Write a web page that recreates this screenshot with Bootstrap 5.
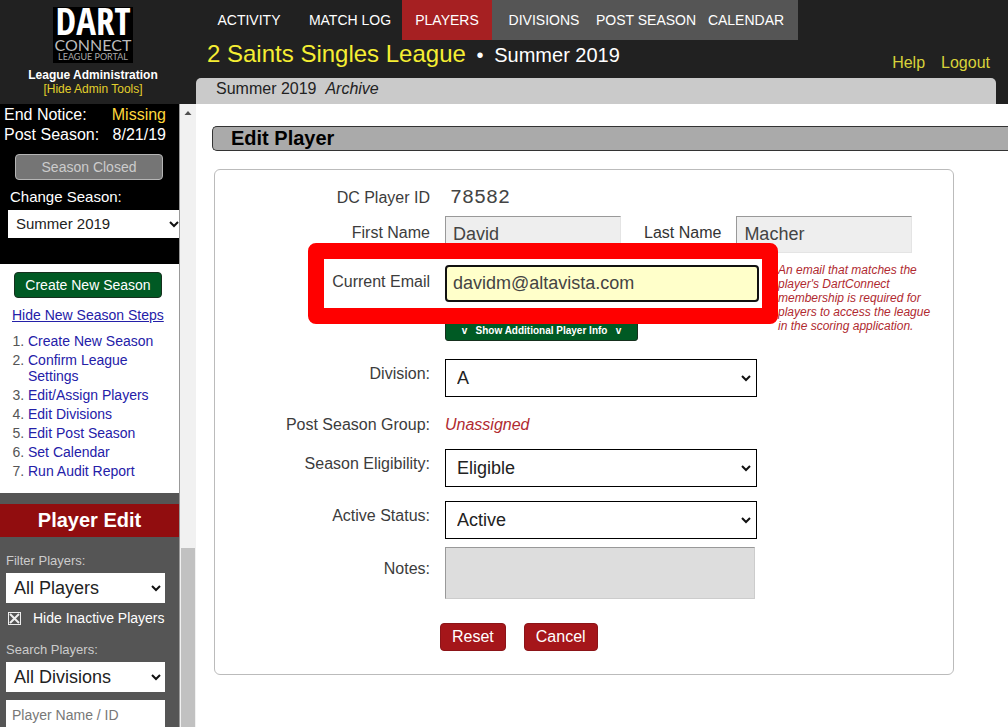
<!DOCTYPE html>
<html lang="en">
<head>
<meta charset="utf-8">
<meta name="viewport" content="width=device-width, initial-scale=1">
<title>Edit Player - DartConnect League Portal</title>
<link href="https://cdn.jsdelivr.net/npm/bootstrap@5.3.0/dist/css/bootstrap.min.css" rel="stylesheet">
<style>
  body { font-family: "Liberation Sans", Arial, sans-serif; font-size: 16px; line-height: 20px; color: #333; background: #fff; }
  .site-header { background: #212121; min-height: 104px; }
  .brand { flex: 0 0 196px; padding: 7px 10px 0 0; color: #fff; font-size: 12px; line-height: 14px; }
  .brand a { color: #e2cf2c; }
  .logo { width: 80px; height: 56px; background: #000; margin-bottom: 5px; display: block; overflow: visible; }
  .main-nav .nav-link { height: 40px; line-height: 40px; padding: 0; font-size: 14px; color: #fff; text-align: center; width: 104px; white-space: nowrap; }
  .main-nav .nav-link.active { background: #a62022; width: 90px; }
  .main-nav .w-side { width: 98px; }
  .nav-tail { background: #555; }
  .league { font-size: 24px; line-height: 28px; color: #f5ee33; padding-left: 11px; }
  .league small { font-size: 20px; color: #fff; }
  .user-links { padding: 0 18px 5px 0; gap: 16px; }
  .user-links a { color: #d8d23a; }
  .sub-bar { background: #cacaca; height: 26px; margin-right: 12px; padding: 1px 0 0 20px; border-radius: 5px 5px 0 0; color: #222; }
  .side { flex: 0 0 179px; overflow: hidden; }
  .season-box { background: #000; color: #fff; height: 160px; padding-top: 1px; }
  .season-box dl { width: 162px; }
  .season-box dd.missing { color: #ffd83c; }
  .btn-side { font-size: 14px; line-height: 18px; padding: 3px 0; width: 148px; border-radius: 4px; }
  .btn-closed, .btn-closed:disabled { background: #757575; border-color: #b5b5b5; color: #ccc; opacity: 1; margin: 9px 0 7px 15px; }
  .season-label { font-size: 15px; padding-left: 2px; margin-bottom: 3px; display: block; }
  .btn-green, .btn-green:hover { background: #005a24; border-color: #16301e; color: #fff; }
  .picker { --bs-form-select-bg-img: url("data:image/svg+xml,%3Csvg xmlns='http://www.w3.org/2000/svg' viewBox='0 0 10 7'%3E%3Cpath d='M1 1l4 4 4-4' fill='none' stroke='%23111' stroke-width='2'/%3E%3C/svg%3E");
    background-image: var(--bs-form-select-bg-img); background-size: 10px 7px; background-position: right 4px center; border-radius: 0; padding: 0 16px 0 8px; color: #222; font-size: 18px; line-height: 20px; border: 0; height: 30px; }
  .picker-season { font-size: 15px; height: 28px; background-position: right 0 center; }
  .picker-main { border: 1px solid #000; height: 38px; padding-left: 11px; width: 312px; background-position: right 5px center; }
  .steps-box { height: 229px; font-size: 14px; line-height: 16px; padding: 8px 12px 0; background: #fff; }
  .steps-box a { color: #2420a8; }
  .steps-box .btn { margin: 0 0 9px 2px; }
  .steps-box ol { padding-left: 16px; margin: 10px 0 0; color: #555; }
  .steps-box li { margin-bottom: 3px; padding-left: 0; }
  .filter-box { background: #555; color: #ccc; font-size: 13px; line-height: 16px; padding-top: 11px; }
  .filter-box h2 { background: #910d0f; color: #fff; font-size: 20px; line-height: 33px; }
  .filter-fields { padding: 16px 14px 0 6px; }
  .tick { appearance: none; flex: none; width: 13px; height: 13px; border: 1px solid #eee; margin: 0 0 0 2px;
    background: url("data:image/svg+xml,%3Csvg xmlns='http://www.w3.org/2000/svg' viewBox='0 0 11 11'%3E%3Cpath d='M1 1l9 9M10 1l-9 9' stroke='%23eee' stroke-width='2'/%3E%3C/svg%3E"); }
  .tick-row { margin: 7px 0 16px; }
  .tick-label { font-size: 14px; color: #fff; }
  .find { font-size: 14px; height: 30px; border-radius: 0; border: 0; padding: 0 6px; }
  .find::placeholder { color: #777; }
  .track { flex: 0 0 17px; background: #f1f1f1; border-left: 1px solid #999; }
  .track svg { display: block; margin: 0 auto; height: 16px; }
  .thumb { background: #c1c1c1; margin: 428px 1px 0; }
  .page-title { margin: 22px 0 18px 16px; background: #aaa; border: 1px solid #333; border-right: 0; border-radius: 5px 0 0 5px; color: #000; font-size: 20px; line-height: 23px; padding-left: 18px; }
  .panel { max-width: 740px; margin-left: 18px; border: 1px solid #bbb; border-radius: 6px; padding: 18px 14px 23px 0; }
  .lbl { flex: 0 0 215px; text-align: right; margin-right: 15px; color: #3c3c3c; line-height: 20px; }
  .lbl-high { padding-top: 5px; }
  .lbl-name { padding-top: 7px; }
  .last-label { margin: 0 15px 0 23px; }
  .player-id { font: 20px/20px "Liberation Mono", monospace; color: #444; padding-left: 5px; }
  .field { border-radius: 0; font-size: 18px; line-height: 20px; color: #444; padding: 0 7px; border: 1px solid #e4e4e4; border-top-color: #999; border-left-color: #999; height: 37px; }
  .field:disabled { background: #eee; color: #444; }
  .name { width: 176px; }
  .email, .email:focus { width: 314px; padding: 0 6px; background: #ffffca; border: 2px solid #111; border-radius: 4px; box-shadow: none; color: #444; }
  .ring { position: absolute; inset: -22px -19px; left: 93px; border: 16px solid #f00; border-radius: 8px; pointer-events: none; z-index: 2; }
  .hint { color: #b02a30; font-size: 12px; line-height: 14px; margin: -2px 0 0 19px; width: 156px; }
  .btn-info-toggle { font-size: 10px; line-height: 12px; font-weight: bold; border-radius: 3px; width: 193px; padding: 4px 0 3px; white-space: pre; }
  .unassigned { color: #b02a30; }
  .notes, .notes:disabled { width: 310px; height: 52px; background: #ddd; border: 1px solid #ccc; border-top-color: #999; border-left-color: #999; border-radius: 0; resize: none; }
  .btn-red, .btn-red:hover { background: #a5161a; border-color: #8c1418; color: #fff; font-size: 16px; line-height: 20px; padding: 3px 11px; border-radius: 4px; }
  .actions { gap: 18px; padding-left: 225px; }
  .gap-a { margin-top: 8px; } .gap-b { margin-top: 12px; } .gap-c { margin-top: 14px; } .gap-d { margin-top: 18px; } .gap-e { margin-top: 24px; }
</style>
</head>
<body class="min-vh-100 vh-100 d-flex flex-column overflow-hidden">
<header class="site-header d-flex">
  <div class="brand text-center">
    <svg class="logo mx-auto" viewBox="0 0 80 56" role="img" aria-label="DartConnect League Portal">
      <text x="40" y="28" text-anchor="middle" font-family="'Open Sans Condensed','Liberation Sans Narrow','Open Sans',sans-serif" font-weight="700" font-size="37" fill="#fff">DART</text>
      <text x="40" y="44" text-anchor="middle" font-family="Lato,sans-serif" font-weight="400" font-size="16" fill="#bbb">CONNECT</text>
      <text x="40" y="53" text-anchor="middle" font-family="Lato,sans-serif" font-size="9" fill="#aaa">LEAGUE PORTAL</text>
    </svg>
    <div class="fw-bold">League Administration</div>
    <a href="#" class="text-decoration-none">[Hide Admin Tools]</a>
  </div>
  <div class="flex-grow-1 d-flex flex-column">
    <nav class="main-nav d-flex ps-1" aria-label="Main">
      <a class="nav-link w-side" href="#">ACTIVITY</a>
      <a class="nav-link" href="#">MATCH LOG</a>
      <a class="nav-link active" href="#" aria-current="page">PLAYERS</a>
      <div class="nav-tail d-flex">
        <a class="nav-link" href="#">DIVISIONS</a>
        <a class="nav-link w-side" href="#">POST SEASON</a>
        <a class="nav-link" href="#">CALENDAR</a>
      </div>
    </nav>
    <div class="d-flex justify-content-between flex-grow-1">
      <div class="league">2 Saints Singles League <small class="ms-1">•</small> <small class="ms-1">Summer 2019</small></div>
      <div class="user-links d-flex align-items-end"><a href="#" class="text-decoration-none">Help</a><a href="#" class="text-decoration-none">Logout</a></div>
    </div>
    <div class="sub-bar">Summer 2019&nbsp; <em>Archive</em></div>
  </div>
</header>

<div class="d-flex flex-grow-1 overflow-hidden">
  <aside class="side">
    <section class="season-box">
      <dl class="d-flex flex-wrap justify-content-between ms-1 mb-0">
        <dt class="fw-normal">End Notice:</dt><dd class="missing mb-0">Missing</dd>
        <dt class="fw-normal">Post Season:</dt><dd class="mb-0">8/21/19</dd>
      </dl>
      <button class="btn btn-side btn-closed d-block" disabled>Season Closed</button>
      <div class="ps-2">
        <label for="season" class="season-label">Change Season:</label>
        <select id="season" class="form-select picker picker-season"><option>Summer 2019</option></select>
      </div>
    </section>
    <section class="steps-box">
      <button class="btn btn-side btn-green d-block">Create New Season</button>
      <a href="#" class="text-nowrap">Hide New Season Steps</a>
      <ol>
        <li><a href="#" class="text-decoration-none">Create New Season</a></li>
        <li><a href="#" class="text-decoration-none">Confirm League Settings</a></li>
        <li><a href="#" class="text-decoration-none">Edit/Assign Players</a></li>
        <li><a href="#" class="text-decoration-none">Edit Divisions</a></li>
        <li><a href="#" class="text-decoration-none">Edit Post Season</a></li>
        <li><a href="#" class="text-decoration-none">Set Calendar</a></li>
        <li><a href="#" class="text-decoration-none">Run Audit Report</a></li>
      </ol>
    </section>
    <section class="filter-box">
      <h2 class="text-center fw-bold mb-0">Player Edit</h2>
      <div class="filter-fields">
        <label for="who" class="d-block mb-1">Filter Players:</label>
        <select id="who" class="form-select picker"><option>All Players</option></select>
        <div class="tick-row d-flex align-items-center">
          <input type="checkbox" id="inactive" class="tick" checked>
          <label for="inactive" class="tick-label ms-2 ps-1 text-nowrap">Hide Inactive Players</label>
        </div>
        <label for="div" class="d-block mb-1">Search Players:</label>
        <select id="div" class="form-select picker mb-2"><option>All Divisions</option></select>
        <input type="text" class="form-control find" placeholder="Player Name / ID" aria-label="Player Name / ID">
      </div>
    </section>
  </aside>
  <div class="track d-flex flex-column" aria-hidden="true">
    <svg width="16" height="16" viewBox="0 0 16 16"><path d="M4.500 11L8 7l3.500 4z" fill="#505050"/></svg>
    <div class="thumb flex-grow-1"></div>
  </div>

  <main class="flex-grow-1 overflow-hidden">
    <h1 class="page-title fw-bold">Edit Player</h1>
    <form class="panel">
      <div class="d-flex">
        <div class="lbl">DC Player ID</div><output class="player-id">78582</output>
      </div>
      <div class="d-flex gap-a">
        <label class="lbl lbl-name" for="first">First Name</label>
        <input id="first" class="form-control field name" value="David" disabled>
        <label class="lbl-name last-label" for="last">Last Name</label>
        <input id="last" class="form-control field name" value="Macher" disabled>
      </div>
      <div class="d-flex gap-b">
        <div>
          <div class="d-flex position-relative">
            <label class="lbl lbl-name" for="email">Current Email</label>
            <input id="email" type="text" inputmode="email" class="form-control field email" value="davidm@altavista.com">
            <div class="ring"></div>
          </div>
          <div class="d-flex gap-d">
            <div class="lbl"></div>
            <button type="button" class="btn btn-green btn-info-toggle">v   Show Additional Player Info   v</button>
          </div>
        </div>
        <em class="hint">An email that matches the player's DartConnect membership is required for players to access the league in the scoring application.</em>
      </div>
      <div class="d-flex gap-d">
        <label class="lbl lbl-high" for="division">Division:</label>
        <select id="division" class="form-select picker picker-main"><option>A</option></select>
      </div>
      <div class="d-flex gap-d align-items-center">
        <div class="lbl">Post Season Group:</div><em class="unassigned">Unassigned</em>
      </div>
      <div class="d-flex gap-c">
        <label class="lbl lbl-high" for="elig">Season Eligibility:</label>
        <select id="elig" class="form-select picker picker-main"><option>Eligible</option></select>
      </div>
      <div class="d-flex gap-c">
        <label class="lbl lbl-high" for="status">Active Status:</label>
        <select id="status" class="form-select picker picker-main"><option>Active</option></select>
      </div>
      <div class="d-flex gap-a">
        <label class="lbl pt-2 mt-1" for="notes">Notes:</label>
        <textarea id="notes" class="form-control notes" disabled></textarea>
      </div>
      <div class="d-flex gap-e actions">
        <button type="reset" class="btn btn-red">Reset</button>
        <button type="button" class="btn btn-red">Cancel</button>
      </div>
    </form>
  </main>
</div>
<script src="https://cdn.jsdelivr.net/npm/bootstrap@5.3.0/dist/js/bootstrap.bundle.min.js"></script>
<script>
  const email = document.getElementById('email');
  email.focus();
  email.setSelectionRange(email.value.length, email.value.length);
</script>
</body>
</html>
